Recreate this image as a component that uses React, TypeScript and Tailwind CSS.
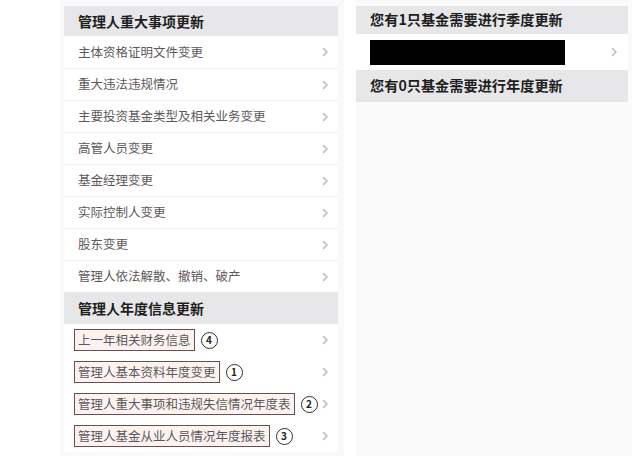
import React from "react";

const font = { fontFamily: '"Noto Sans CJK SC", "Noto Sans", sans-serif' };

function Chevron() {
  return (
    <svg width="7" height="10" viewBox="0 0 7 10" className="shrink-0">
      <path d="M1.5 1.5 L5 5 L1.5 8.5" fill="none" stroke="#bdbdbd" strokeWidth="1.6" strokeLinecap="round" strokeLinejoin="round" />
    </svg>
  );
}

function Circle({ n }: { n: string }) {
  return (
    <span className="ml-[6px] flex h-[17px] w-[17px] items-center justify-center rounded-full border-[1.5px] border-[#2e2e2e] text-[10px] font-bold leading-none text-[#222]">
      {n}
    </span>
  );
}

const section1 = [
  "主体资格证明文件变更",
  "重大违法违规情况",
  "主要投资基金类型及相关业务变更",
  "高管人员变更",
  "基金经理变更",
  "实际控制人变更",
  "股东变更",
  "管理人依法解散、撤销、破产",
];

const section2: [string, string][] = [
  ["上一年相关财务信息", "4"],
  ["管理人基本资料年度变更", "1"],
  ["管理人重大事项和违规失信情况年度表", "2"],
  ["管理人基金从业人员情况年度报表", "3"],
];

export default function App() {
  return (
    <div className="flex h-[463px] w-[632px] overflow-hidden bg-white" style={font}>
      <div className="ml-[60px] flex h-[456px] w-[284px] flex-col bg-[#f9f8fa] pl-[4px] pr-[6px] pt-[6px]">
        <div className="flex h-[30px] items-center bg-[#e7e7ea] pl-[14px] text-[14px] font-bold text-[#1e1e1e]">
          管理人重大事项更新
        </div>
        {section1.map((t, i) => (
          <div
            key={t}
            className={`flex h-[32px] items-center justify-between bg-white pl-[14px] pr-[9px] text-[12.5px] text-[#5e585a] ${i > 0 ? "border-t border-[#f1eff1]" : ""}`}
          >
            <span>{t}</span>
            <Chevron />
          </div>
        ))}
        <div className="flex h-[32px] items-center bg-[#e7e7ea] pl-[14px] text-[14px] font-bold text-[#1e1e1e]">
          管理人年度信息更新
        </div>
        {section2.map(([t, n]) => (
          <div key={t} className="flex h-[32px] items-center justify-between bg-white pl-[10px] pr-[9px]">
            <div className="flex items-center">
              <span className="flex h-[22px] items-center border border-[#6e4e4c] bg-[#fbf3f2] px-[3px] text-[12.5px] text-[#5e585a]">
                {t}
              </span>
              <Circle n={n} />
            </div>
            <Chevron />
          </div>
        ))}
      </div>
      <div className="ml-[12px] flex h-[456px] flex-1 flex-col bg-[#fafafb] pt-[6px] pr-[4px]">
        <div className="flex h-[28px] items-center bg-[#e7e7ea] pl-[14px] text-[14.2px] font-bold text-[#1e1e1e]">
          您有1只基金需要进行季度更新
        </div>
        <div className="flex h-[36px] items-center justify-between bg-white pl-[14px] pr-[10px]">
          <div className="h-[25px] w-[195px] bg-black" />
          <Chevron />
        </div>
        <div className="flex h-[32px] items-center bg-[#e7e7ea] pl-[14px] text-[14.2px] font-bold text-[#1e1e1e]">
          您有0只基金需要进行年度更新
        </div>
      </div>
    </div>
  );
}
